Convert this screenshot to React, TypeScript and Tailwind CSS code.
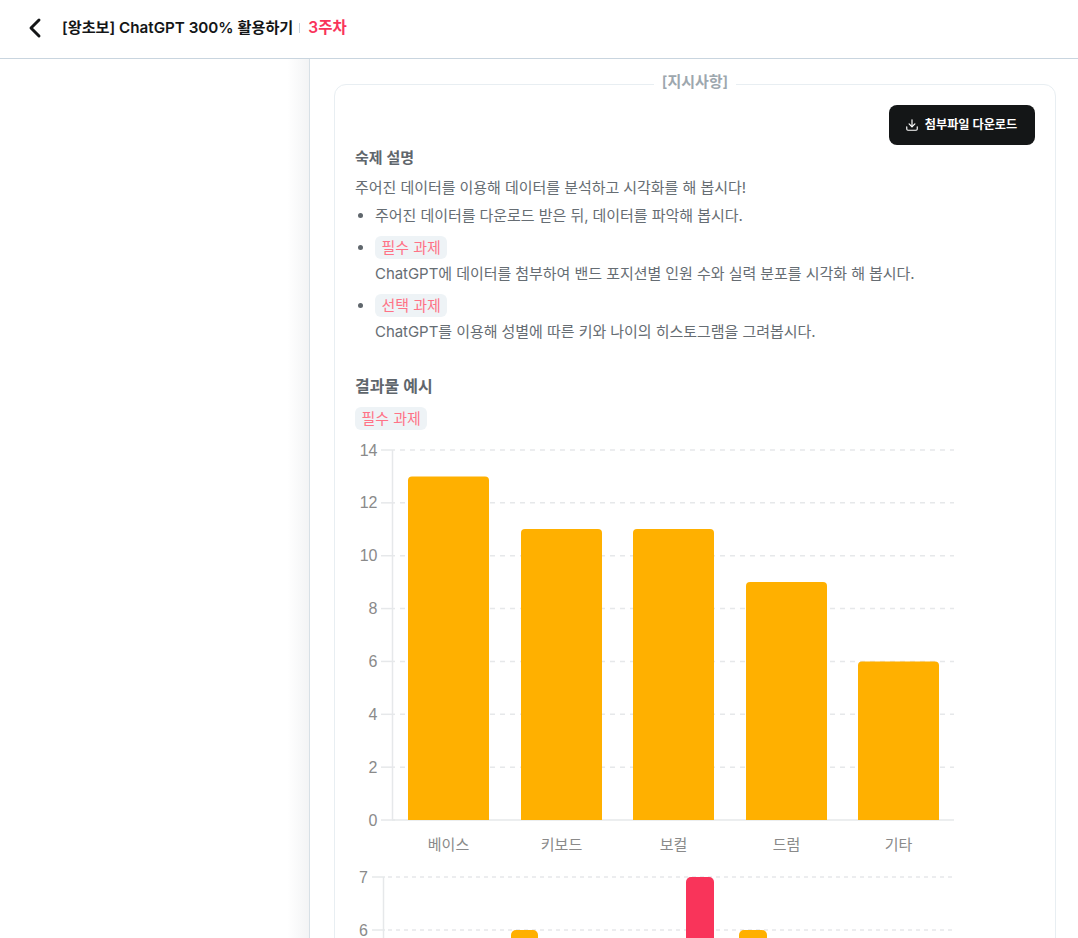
import { ChevronLeft, Download } from "lucide-react";

const FONT = "font-['Inter','Noto_Sans_CJK_KR',sans-serif]";

function Tag({ children }: { children: string }) {
  return (
    <span className="mb-[3px] block w-fit rounded-md bg-[#eef3f6] px-[6.5px] text-[15px] leading-[23px] text-[#ff7286]">
      {children}
    </span>
  );
}

function BarChart() {
  const ticks = [14, 12, 10, 8, 6, 4, 2, 0];
  const bars: [string, number, number][] = [
    ["베이스", 408, 476.5],
    ["키보드", 521, 529],
    ["보컬", 633, 529],
    ["드럼", 746, 582],
    ["기타", 858, 661.5],
  ];
  return (
    <svg width={610} height={428} viewBox="355 440 610 428" className="block">
      {ticks.map((t, i) => {
        const y = 450 + i * 52.86;
        return (
          <g key={t}>
            {t !== 0 && <line x1={400} x2={954} y1={y} y2={y} stroke="#e6e8ea" strokeWidth={1.5} strokeDasharray="5 5" />}
            <line x1={381} x2={395} y1={y} y2={y} stroke="#e6e8ea" strokeWidth={1.5} />
            <text x={377.5} y={y + 5.5} textAnchor="end" fontSize={16} fill="#8a8a8a" fontFamily="'Liberation Sans', sans-serif">{t}</text>
          </g>
        );
      })}
      <line x1={392.5} x2={392.5} y1={450} y2={820} stroke="#e6e8ea" strokeWidth={1.5} />
      <line x1={392} x2={954} y1={820} y2={820} stroke="#e6e8ea" strokeWidth={1.5} />
      {bars.map(([label, x, top]) => (
        <g key={label}>
          <path d={`M${x} 820V${top + 4}a4 4 0 0 1 4-4h73a4 4 0 0 1 4 4V820z`} fill="#ffb000" />
          <text x={x + 40.5} y={850} textAnchor="middle" fontSize={15} fill="#8a8a8a" fontFamily="'Noto Sans CJK KR', sans-serif">{label}</text>
        </g>
      ))}
    </svg>
  );
}

function SecondChart() {
  return (
    <svg width={610} height={70} viewBox="355 868 610 70" className="block">
      {[877, 930].map((y, i) => (
        <g key={y}>
          <line x1={388} x2={952} y1={y} y2={y} stroke="#e6e8ea" strokeWidth={1.5} strokeDasharray="4 4" />
          <line x1={372} x2={385} y1={y} y2={y} stroke="#e6e8ea" strokeWidth={1.5} />
          <text x={368} y={y + 5.5} textAnchor="end" fontSize={16} fill="#8a8a8a" fontFamily="'Liberation Sans', sans-serif">{7 - i}</text>
        </g>
      ))}
      <line x1={383.5} x2={383.5} y1={877} y2={938} stroke="#e6e8ea" strokeWidth={1.5} />
      <path d="M511 938V935a5 5 0 0 1 5-5h17a5 5 0 0 1 5 5V938z" fill="#ffb000" />
      <path d="M739 938V935a5 5 0 0 1 5-5h18a5 5 0 0 1 5 5V938z" fill="#ffb000" />
      <path d="M686 938V882a5 5 0 0 1 5-5h18a5 5 0 0 1 5 5V938z" fill="#f9345a" />
    </svg>
  );
}

export default function App() {
  return (
    <div className={`h-[938px] w-[1078px] overflow-hidden bg-white ${FONT}`}>
      <header className="flex h-[59px] items-center border-b border-[#c9d5df] pb-[2px] pl-6">
        <ChevronLeft className="-ml-[5px] size-8 text-[#141617]" strokeWidth={2.2} />
        <h1 className="ml-[11px] text-[15.2px] font-semibold text-[#141617]">[왕초보] ChatGPT 300% 활용하기</h1>
        <span className="ml-[6px] mr-[8px] h-[10px] w-px bg-[#c9d5df]" />
        <span className="text-[15.5px] font-semibold text-[#f9345a]">3주차</span>
      </header>
      <div className="flex h-[879px]">
        <aside className="w-[309px] shrink-0 bg-gradient-to-r from-white from-[93%] to-[#f3f4f5]" />
        <main className="min-w-0 flex-1 border-l border-[#d7e0e6] pl-6 pr-[22px] pt-[25px]">
          <section className="relative h-[900px] rounded-xl border border-[#e8eef2] px-5 pt-5">
            <div className="absolute -top-[13px] left-0 right-0 flex justify-center">
              <span className="bg-white px-2 text-[15px] font-semibold leading-5 text-[#9da7ae]">[지시사항]</span>
            </div>
            <div className="flex justify-end">
              <button className="flex h-10 w-[146px] items-center justify-center gap-1.5 rounded-lg bg-[#141617] pr-[2px] text-[12.2px] font-bold text-white">
                <Download className="size-[14px]" strokeWidth={2} />
                첨부파일 다운로드
              </button>
            </div>
            <div className="text-[15px] text-[#666d73]">
              <h3 className="mt-[1px] font-semibold leading-6 text-[#5f666c]">숙제 설명</h3>
              <p className="mt-[6px] leading-6 tracking-[-0.05px]">주어진 데이터를 이용해 데이터를 분석하고 시각화를 해 봅시다!</p>
              <ul className="mt-[4px] list-disc pl-5 leading-6 tracking-[-0.05px] marker:text-[#5f666c]">
                <li>주어진 데이터를 다운로드 받은 뒤, 데이터를 파악해 봅시다.</li>
                <li className="mt-[8px]">
                  <Tag>필수 과제</Tag>
                  <span>ChatGPT에 데이터를 첨부하여 밴드 포지션별 인원 수와 실력 분포를 시각화 해 봅시다.</span>
                </li>
                <li className="mt-[8px]">
                  <Tag>선택 과제</Tag>
                  <span>ChatGPT를 이용해 성별에 따른 키와 나이의 히스토그램을 그려봅시다.</span>
                </li>
              </ul>
              <h3 className="mt-[30px] text-base font-semibold leading-6 text-[#5f666c]">결과물 예시</h3>
              <div className="mt-[9px]"><Tag>필수 과제</Tag></div>
            </div>
            <div className="mt-[10px]">
              <BarChart />
              <SecondChart />
            </div>
          </section>
        </main>
      </div>
    </div>
  );
}
